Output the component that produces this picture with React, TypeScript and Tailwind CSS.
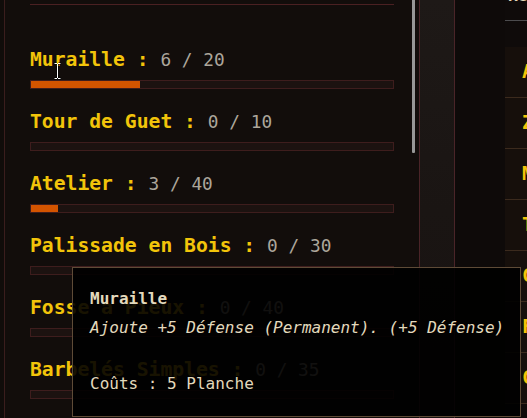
import React from "react";

const items = [
  { name: "Muraille", cur: 6, max: 20 },
  { name: "Tour de Guet", cur: 0, max: 10 },
  { name: "Atelier", cur: 3, max: 40 },
  { name: "Palissade en Bois", cur: 0, max: 30 },
  { name: "Fosse à Pieux", cur: 0, max: 40 },
  { name: "Barbelés Simples", cur: 0, max: 35 },
];

const rows = ["A", "Z", "M", "T", "C", "F", "C"];

export default function App() {
  return (
    <div className="relative flex h-[418px] w-[527px] overflow-hidden bg-[#0f0b0a] font-['DejaVu_Sans_Mono',monospace]">
      {/* left strip */}
      <div className="w-[4px] shrink-0 bg-[#100c0a]" />
      {/* left panel */}
      <div className="flex w-[415px] shrink-0 border-l border-[#3a1d1d] bg-[#120d0b]">
        <div className="w-[364px] shrink-0 ml-[25px]">
          <div className="h-[4px]" />
          <div className="h-px bg-[#4a2022]" />
          <div className="pt-[43px]">
            {items.map((it) => (
              <div key={it.name} className="mb-[21px]">
                <div className="h-[24px] whitespace-nowrap leading-[24px] text-[19.7px] font-bold text-[#f2c40a]">
                  {it.name} :{" "}
                  <span className="text-[17.8px] font-normal text-[#aca69b]">
                    {it.cur} / {it.max}
                  </span>
                </div>
                <div className="mt-[8px] h-[9px] border border-[#3e1d1d] bg-[#1c1210]">
                  <div
                    className="h-full bg-[#d35400]"
                    style={{ width: `${(it.cur / it.max) * 100}%` }}
                  />
                </div>
              </div>
            ))}
          </div>
        </div>
        <div className="w-[18px] shrink-0" />
        <div className="h-[153px] w-[3px] shrink-0 rounded-b-[1px] bg-[#979797]" />
      </div>
      {/* middle column */}
      <div className="w-[36px] shrink-0 border-x border-[#4a2428] bg-gradient-to-b from-[#1e1917] via-[#1a1513] to-[#181211]" />
      {/* gap */}
      <div className="w-[50px] shrink-0 bg-[#0e0a09]" />
      {/* right panel */}
      <div className="flex w-[22px] shrink-0 flex-col">
        <div className="h-[20px] overflow-hidden">
          <div className="-mt-[14px] pl-[3px] leading-[20px] text-[16px] font-bold text-[#e6d8b8]">
            Ré
          </div>
        </div>
        <div className="h-px bg-[#4c4c4e]" />
        <div className="h-[26px]" />
        {rows.map((r, i) => (
          <div
            key={i}
            className="flex h-[51px] shrink-0 items-center border-b border-[#3b2a1d] bg-[#160f0b] pl-[17px] text-[19.7px] font-bold text-[#f2c40a]"
          >
            {r}
          </div>
        ))}
      </div>

      {/* tooltip */}
      <div className="absolute left-[72px] top-[267px] h-[150px] w-[449px] border border-[#5e4b37] bg-black/90 px-[17px] pt-[21px] text-[16px] leading-[20px] text-[#e3d9bc]">
        <div className="font-bold">Muraille</div>
        <div className="mt-[9px] whitespace-nowrap italic">
          Ajoute +5 Défense (Permanent). (+5 Défense)
        </div>
        <div className="mt-[36px] whitespace-nowrap">Coûts : 5 Planche</div>
      </div>

      {/* mouse cursor */}
      <svg
        className="absolute left-[53px] top-[62px]"
        width="9"
        height="18"
        viewBox="0 0 9 18"
      >
        <path
          d="M1 1.5h2.5M5.5 1.5H8M4.5 2v14M1 16.5h2.5M5.5 16.5H8"
          stroke="#000"
          strokeWidth="2.2"
          fill="none"
        />
        <path
          d="M1.5 1.5h2.5M5 1.5h2.5M4.5 2v14M1.5 16.5h2.5M5 16.5h2.5"
          stroke="#fff"
          strokeWidth="1"
          fill="none"
        />
      </svg>
    </div>
  );
}
